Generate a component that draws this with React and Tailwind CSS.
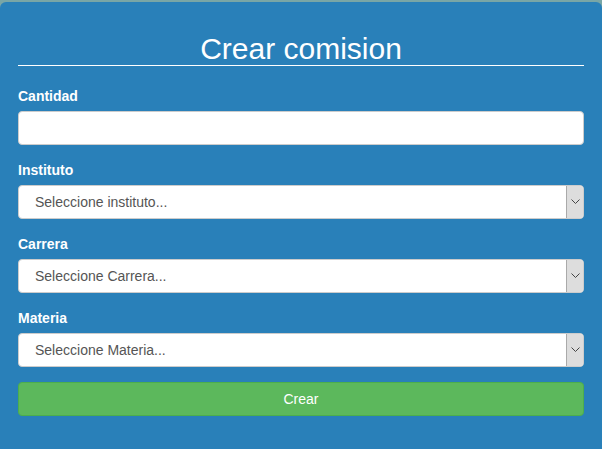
import React from 'react';

function Chevron() {
  return (
    <svg width="9" height="6" viewBox="0 0 9 6" fill="none">
      <path d="M0.5 0.5 L4.5 4.5 L8.5 0.5" stroke="#444" strokeWidth="1" />
    </svg>
  );
}

function SelectField({label, placeholder}) {
  return (
    <div className="mb-[15px]">
      <label className="mb-[5px] block h-5 text-sm leading-5 font-bold">{label}</label>
      <div className="flex h-[34px] items-stretch rounded-[4px] border border-[#ccc] bg-white">
        <span className="flex-1 pl-4 text-sm leading-[32px] text-[#555]">{placeholder}</span>
        <span className="flex w-[17px] items-center justify-center rounded-r-[3px] border-l border-[#aaa] bg-[#dddddd]">
          <Chevron />
        </span>
      </div>
    </div>
  );
}

export default function App() {
  return (
    <div className="h-[449px] w-[602px] overflow-hidden bg-[#79a6a6] pt-[2px] font-['Liberation_Sans',Arial,sans-serif] text-white">
      <div className="h-[452px] rounded-md bg-[#2980b9] px-[18px] pt-[30px]">
        <h2 className="border-b border-white text-center text-[30px] leading-[33px] font-normal">
          Crear comision
        </h2>
        <div className="mt-[20px] mb-[15px]">
          <label className="mb-[5px] block h-5 text-sm leading-5 font-bold">Cantidad</label>
          <div className="h-[34px] rounded-[4px] border border-[#ccc] bg-white" />
        </div>
        <SelectField label="Instituto" placeholder="Seleccione instituto..." />
        <SelectField label="Carrera" placeholder="Seleccione Carrera..." />
        <SelectField label="Materia" placeholder="Seleccione Materia..." />
        <button className="h-[34px] w-full rounded-[4px] border border-[#4cae4c] bg-[#5cb85c] text-sm text-white">
          Crear
        </button>
      </div>
    </div>
  );
}
